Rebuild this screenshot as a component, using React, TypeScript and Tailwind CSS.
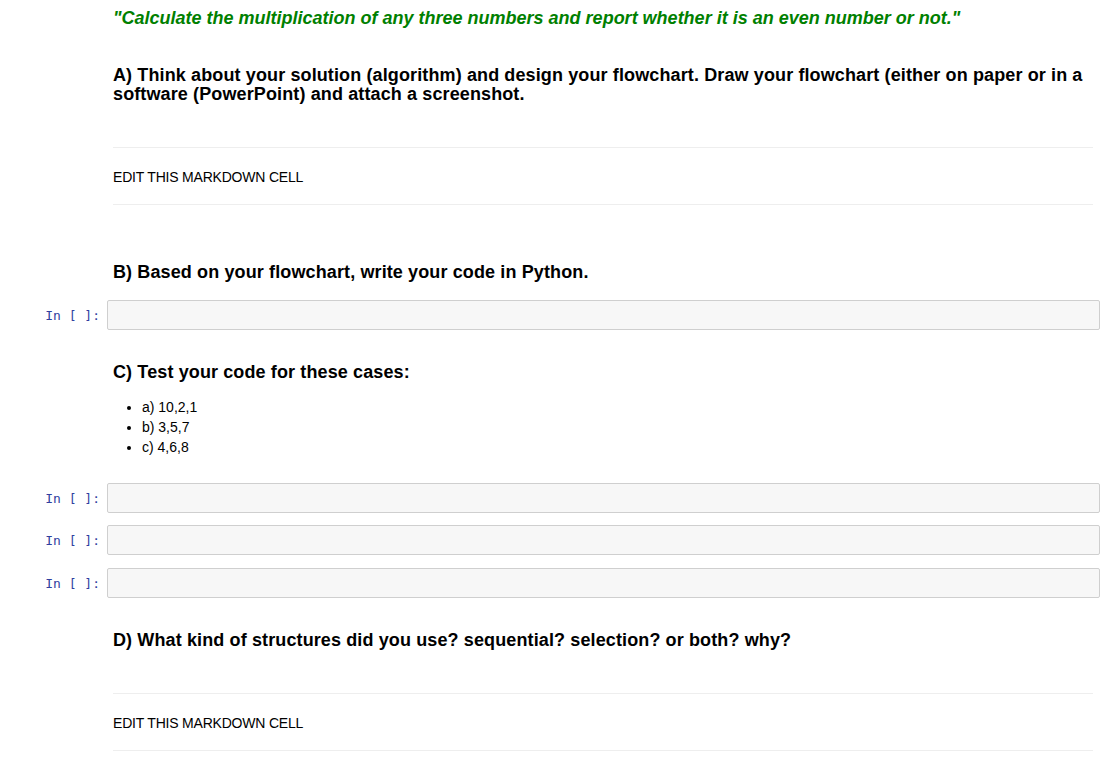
const sans = "font-['Liberation_Sans',Arial,sans-serif]"

function Heading({
  children,
  className = '',
  color = 'text-black tracking-[0.12px]',
}: {
  children: React.ReactNode
  className?: string
  color?: string
}) {
  return (
    <h4 className={`mr-[20px] ml-[113px] text-[18px] font-bold ${color} ${className}`}>
      {children}
    </h4>
  )
}

function Rule({ className = '' }: { className?: string }) {
  return <div className={`mr-[20px] ml-[113px] h-px bg-[#eeeeee] ${className}`} />
}

function EditCell({ className = '' }: { className?: string }) {
  return (
    <p className={`mr-[20px] ml-[113px] text-[14px] leading-[20px] tracking-[-0.2px] text-black ${className}`}>
      EDIT THIS MARKDOWN CELL
    </p>
  )
}

function CodeCell({ className = '' }: { className?: string }) {
  return (
    <div className={`flex items-center pr-[13px] ${className}`}>
      <div className="w-[107px] shrink-0 pt-px pr-[7px] text-right font-['DejaVu_Sans_Mono',monospace] text-[13px] leading-[18px] text-[#303f9f]">
        In&nbsp;[&nbsp;]:
      </div>
      <div className="h-[30px] flex-1 rounded-[2px] border border-[#cfcfcf] bg-[#f7f7f7]" />
    </div>
  )
}

export default function App() {
  return (
    <div className={`min-h-screen w-full bg-white pb-[30px] ${sans}`}>
      <Heading className="pt-[9px] leading-[19px] italic" color="text-[#008000]">
        "Calculate the multiplication of any three numbers and report whether it is an even number or not."
      </Heading>

      <Heading className="mt-[38px] leading-[18.5px]">
        A) Think about your solution (algorithm) and design your flowchart. Draw your flowchart (either on paper or in a
        software (PowerPoint) and attach a screenshot.
      </Heading>

      <Rule className="mt-[44px]" />
      <EditCell className="mt-[18.5px]" />
      <Rule className="mt-[17.5px]" />

      <Heading className="mt-[58px] leading-[19px]">B) Based on your flowchart, write your code in Python.</Heading>

      <CodeCell className="mt-[18px]" />

      <Heading className="mt-[33px] leading-[19px]">C) Test your code for these cases:</Heading>

      <ul className="mt-[14.5px] mr-[20px] ml-[113px] list-disc pl-[29px] text-[14px] leading-[20px] text-black">
        <li>a) 10,2,1</li>
        <li>b) 3,5,7</li>
        <li>c) 4,6,8</li>
      </ul>

      <CodeCell className="mt-[26.5px]" />
      <CodeCell className="mt-[12px]" />
      <CodeCell className="mt-[13px]" />

      <Heading className="mt-[33px] leading-[19px]">
        D) What kind of structures did you use? sequential? selection? or both? why?
      </Heading>

      <Rule className="mt-[43px]" />
      <EditCell className="mt-[18.5px]" />
      <Rule className="mt-[17.5px]" />
    </div>
  )
}
